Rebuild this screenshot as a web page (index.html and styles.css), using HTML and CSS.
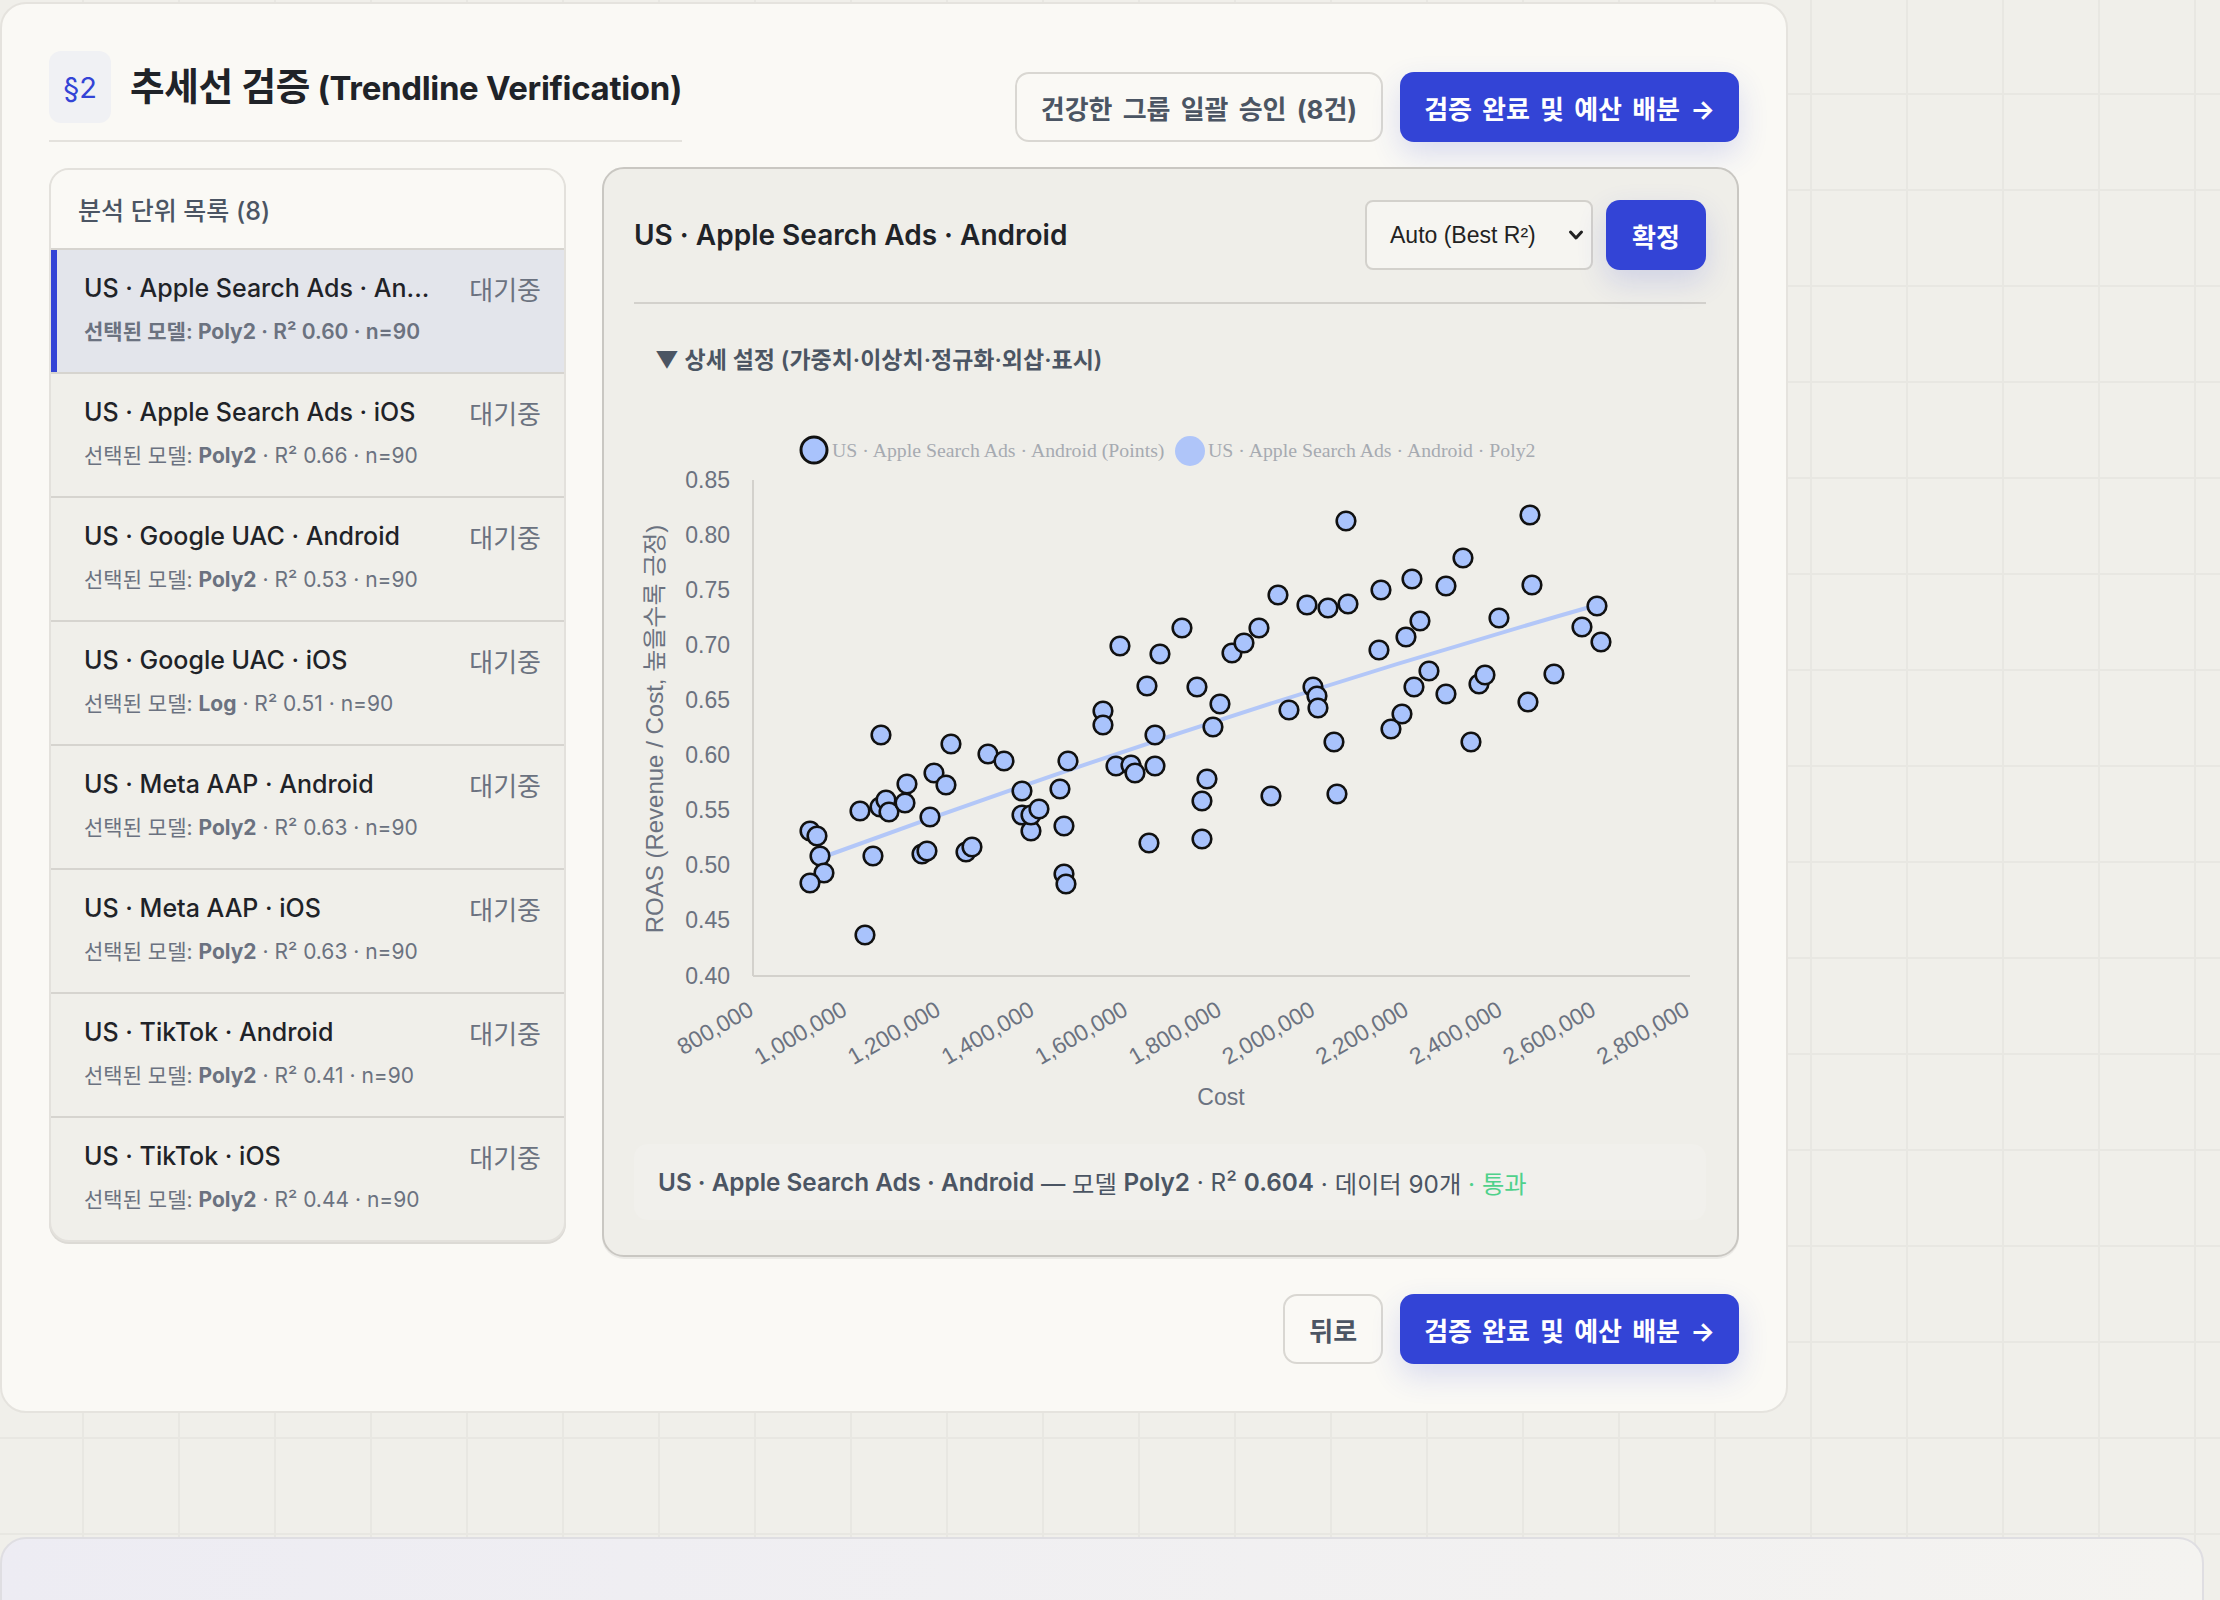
FILE: index.html
```html
<!DOCTYPE html>
<html lang="ko">
<head>
    <meta charset="UTF-8" />
    <title>추세선 검증</title>
    <link rel="stylesheet" href="styles.css">
</head>
<body>
    <div class="page">
        <section class="card">
            <header class="card-head">
                <div class="title-block">
                    <span class="badge">§2</span>
                    <h2><span class="ko">추세선 검증</span> (Trendline Verification)</h2>
                </div>
                <div class="actions">
                    <button class="btn btn-outline">건강한 그룹 일괄 승인 (8건)</button>
                    <button class="btn btn-primary">검증 완료 및 예산 배분 →</button>
                </div>
            </header>

            <div class="layout">
                <aside class="unit-list">
                    <div class="unit-list-head">분석 단위 목록 (8)</div>
                    <div class="unit active">
                        <div class="unit-row"><span class="unit-name">US · Apple Search Ads · An...</span><span class="unit-status">대기중</span></div>
                        <div class="unit-meta">선택된 모델: <b>Poly2</b> · R² 0.60 · n=90</div>
                    </div>
                    <div class="unit">
                        <div class="unit-row"><span class="unit-name">US · Apple Search Ads · iOS</span><span class="unit-status">대기중</span></div>
                        <div class="unit-meta">선택된 모델: <b>Poly2</b> · R² 0.66 · n=90</div>
                    </div>
                    <div class="unit">
                        <div class="unit-row"><span class="unit-name">US · Google UAC · Android</span><span class="unit-status">대기중</span></div>
                        <div class="unit-meta">선택된 모델: <b>Poly2</b> · R² 0.53 · n=90</div>
                    </div>
                    <div class="unit">
                        <div class="unit-row"><span class="unit-name">US · Google UAC · iOS</span><span class="unit-status">대기중</span></div>
                        <div class="unit-meta">선택된 모델: <b>Log</b> · R² 0.51 · n=90</div>
                    </div>
                    <div class="unit">
                        <div class="unit-row"><span class="unit-name">US · Meta AAP · Android</span><span class="unit-status">대기중</span></div>
                        <div class="unit-meta">선택된 모델: <b>Poly2</b> · R² 0.63 · n=90</div>
                    </div>
                    <div class="unit">
                        <div class="unit-row"><span class="unit-name">US · Meta AAP · iOS</span><span class="unit-status">대기중</span></div>
                        <div class="unit-meta">선택된 모델: <b>Poly2</b> · R² 0.63 · n=90</div>
                    </div>
                    <div class="unit">
                        <div class="unit-row"><span class="unit-name">US · TikTok · Android</span><span class="unit-status">대기중</span></div>
                        <div class="unit-meta">선택된 모델: <b>Poly2</b> · R² 0.41 · n=90</div>
                    </div>
                    <div class="unit">
                        <div class="unit-row"><span class="unit-name">US · TikTok · iOS</span><span class="unit-status">대기중</span></div>
                        <div class="unit-meta">선택된 모델: <b>Poly2</b> · R² 0.44 · n=90</div>
                    </div>
                </aside>

                <div class="detail">
                    <div class="detail-head">
                        <h3>US · Apple Search Ads · Android</h3>
                        <div class="select">
                            <span>Auto (Best R²)</span>
                            <svg width="16" height="12" viewBox="0 0 16 12"><path d="M2.5 3l5.5 6 5.5-6" fill="none" stroke="#222" stroke-width="3" stroke-linecap="round" stroke-linejoin="round"/></svg>
                        </div>
                        <button class="btn btn-primary btn-small">확정</button>
                    </div>

                    <div class="settings">▼ 상세 설정 (가중치·이상치·정규화·외삽·표시)</div>

                    <svg id="chart" class="chart" width="1072" height="744" viewBox="634 380 1072 744">
                        <circle cx="814" cy="450" r="13" class="pt legend-pt"/>
                        <text x="832" y="457" class="legend">US · Apple Search Ads · Android (Points)</text>
                        <circle cx="1190" cy="451" r="15" class="legend-line"/>
                        <text x="1208" y="457" class="legend">US · Apple Search Ads · Android · Poly2</text>

                        <line x1="753" y1="480" x2="753" y2="976" class="axis"/>
                        <line x1="753" y1="976" x2="1690" y2="976" class="axis"/>

                        <text class="axis-title y-title" transform="translate(663 729) rotate(-90)" text-anchor="middle">ROAS (Revenue / Cost, 높을수록 긍정)</text>
                        <text class="axis-title" x="1221" y="1105" text-anchor="middle">Cost</text>

                        <path d="M826 856 Q1208 716 1590 607" class="trend"/>
                        <g id="ticks"></g>
                        <g id="points"></g>
                    </svg>

                    <div class="summary">
                        <b>US · Apple Search Ads · Android</b>&nbsp;— 모델&nbsp;<b>Poly2</b>&nbsp;· R²&nbsp;<b>0.604</b>&nbsp;· 데이터 90개&nbsp;<span class="ok">· 통과</span>
                    </div>
                </div>
            </div>

            <div class="footer-actions">
                <button class="btn btn-outline">뒤로</button>
                <button class="btn btn-primary">검증 완료 및 예산 배분 →</button>
            </div>
        </section>

        <section class="card card-next"></section>
    </div>

    <script>
        const ns = "http://www.w3.org/2000/svg";
        const ticks = document.getElementById("ticks");
        const pointLayer = document.getElementById("points");

        function el(name, attrs, text) {
            const node = document.createElementNS(ns, name);
            for (const key in attrs) node.setAttribute(key, attrs[key]);
            if (text) node.textContent = text;
            return node;
        }

        // y axis: 0.40 .. 0.85
        for (let i = 0; i <= 9; i++) {
            const y = 975.5 - i * 55.06;
            ticks.appendChild(el("text", { x: 730, y: y + 8, class: "tick", "text-anchor": "end" }, (0.40 + i * 0.05).toFixed(2)));
        }

        // x axis: 800,000 .. 2,800,000
        for (let i = 0; i <= 10; i++) {
            const x = 753 + i * 93.6;
            const label = (800000 + i * 200000).toLocaleString("en-US");
            ticks.appendChild(el("text", { x: x + 2, y: 1014, class: "tick", "text-anchor": "end", transform: `rotate(-30 ${x + 2} 1014)` }, label));
        }

        // cost / roas samples, already in chart pixels
        const points = [
            [810,831],[817,836],[820,856],[824,873],[810,883],[865,935],[873,856],[860,811],[881,735],[880,807],
            [886,800],[889,812],[905,803],[907,784],[930,817],[922,854],[927,851],[934,773],[946,785],[951,744],
            [966,852],[972,847],[988,754],[1004,761],[1022,791],[1022,815],[1031,831],[1031,815],[1039,809],[1060,789],
            [1064,826],[1064,874],[1066,884],[1068,761],[1103,711],[1103,725],[1116,766],[1131,765],[1135,773],[1155,766],
            [1149,843],[1147,686],[1155,735],[1120,646],[1160,654],[1182,628],[1197,687],[1202,801],[1207,779],[1202,839],
            [1213,727],[1220,704],[1232,653],[1244,643],[1259,628],[1271,796],[1278,595],[1289,710],[1307,605],[1313,687],
            [1317,696],[1318,708],[1328,608],[1334,742],[1337,794],[1346,521],[1348,604],[1379,650],[1381,590],[1391,729],
            [1402,714],[1406,637],[1412,579],[1414,687],[1420,621],[1429,671],[1446,586],[1446,694],[1463,558],[1471,742],
            [1479,684],[1485,675],[1499,618],[1530,515],[1532,585],[1528,702],[1554,674],[1582,627],[1597,606],[1601,642]
        ];
        points.forEach(([x, y]) => {
            pointLayer.appendChild(el("circle", { cx: x, cy: y, r: 9.3, class: "pt" }));
        });
    </script>
</body>
</html>
```

FILE: styles.css
```css
body {
    margin: 0;
    font-family: "Inter", "Noto Sans CJK KR", sans-serif;
    color: #1f2328;
    background-color: #f0efea;
    background-image:
        linear-gradient(to right, #e8e7e2 2px, transparent 2px),
        linear-gradient(to bottom, #e8e7e2 2px, transparent 2px);
    background-size: 96px 96px;
    background-position: 82px 93px;
    overflow: hidden;
}

.page {
    padding-top: 2px;
}

.card {
    width: 1788px;
    box-sizing: border-box;
    background: #faf9f5;
    border: 2px solid #e5e3de;
    border-radius: 26px;
    padding: 47px;
}

.card-next {
    width: 2204px;
    height: 200px;
    margin-top: 124px;
    padding: 0;
    border-color: #dfdee2;
    background: linear-gradient(90deg, #edecf3, #f4f3f0);
}

/* header */
.card-head {
    display: flex;
    justify-content: space-between;
    align-items: flex-end;
}

.title-block {
    display: flex;
    align-items: center;
    gap: 19px;
    padding-bottom: 17px;
    border-bottom: 2px solid #e4e2dd;
}

.badge {
    width: 62px;
    height: 72px;
    display: flex;
    align-items: center;
    justify-content: center;
    border-radius: 12px;
    background: #f0f1f4;
    color: #3344d6;
    font-size: 29px;
}

.title-block h2 {
    margin: 0;
    font-size: 33px;
    font-weight: 700;
    letter-spacing: -0.01em;
    line-height: 44px;
}

.title-block h2 .ko {
    font-size: 1.14em;
}

.actions,
.footer-actions {
    display: flex;
    gap: 17px;
}

.btn {
    height: 70px;
    padding: 0 24px;
    border-radius: 14px;
    font-family: inherit;
    font-size: 26px;
    font-weight: 700;
    word-spacing: 4px;
    cursor: pointer;
}

.btn-outline {
    background: #faf9f5;
    border: 2px solid #d9d7d2;
    color: #4b5563;
}

.btn-primary {
    background: #3344d6;
    border: none;
    color: #fff;
    box-shadow: 0 12px 30px rgba(51, 68, 214, 0.16);
}

.btn-small {
    width: 100px;
    padding: 0;
}

/* body */
.layout {
    display: grid;
    grid-template-columns: 517px 1fr;
    gap: 36px;
    margin-top: 25px;
    align-items: start;
}

.unit-list {
    margin-top: 1px;
    border: 2px solid #e3e1dc;
    border-radius: 20px;
    overflow: hidden;
    background: #f0efea;
    box-shadow: 0 2px 0 #dcdad5;
}

.unit-list-head {
    height: 78px;
    display: flex;
    align-items: center;
    padding-left: 27px;
    background: #faf9f5;
    color: #4b5563;
    font-size: 25px;
    font-weight: 500;
}

.unit {
    height: 122px;
    box-sizing: content-box;
    border-top: 2px solid #d6d4cf;
    padding: 0 23px 0 33px;
}

.unit.active {
    background: #e3e5eb;
    box-shadow: inset 6px 0 0 #3344d6;
}

.unit-row {
    display: flex;
    justify-content: space-between;
    align-items: center;
    padding-top: 22px;
    height: 32px;
}

.unit-name {
    font-size: 25px;
    font-weight: 500;
}

.unit-status {
    color: #6b7280;
    font-size: 26px;
}

.unit-meta {
    margin-top: 13px;
    line-height: 30px;
    color: #6b7280;
    font-size: 21px;
}

.unit-meta b {
    font-weight: 700;
}

.unit.active .unit-meta {
    font-weight: 600;
}

/* detail panel */
.detail {
    border: 2px solid #c9c7c2;
    border-radius: 22px;
    background: #efeee9;
    padding: 31px 31px 35px 30px;
    box-shadow: 0 2px 0 rgba(0, 0, 0, 0.06);
}

.detail-head {
    display: flex;
    align-items: center;
    gap: 13px;
    padding-bottom: 32px;
    border-bottom: 2px solid #d3d1cc;
}

.detail-head h3 {
    margin: 0 auto 0 0;
    font-size: 28px;
    font-weight: 600;
}

.select {
    width: 228px;
    height: 70px;
    box-sizing: border-box;
    display: flex;
    align-items: center;
    justify-content: space-between;
    padding: 0 7px 0 23px;
    border: 2px solid #d3d1cc;
    border-radius: 8px;
    background: #f6f5f1;
    font-family: "Liberation Sans", sans-serif;
    font-size: 23px;
    color: #222;
}

.settings {
    margin: 41px 0 0 21px;
    line-height: 30px;
    font-size: 23px;
    font-weight: 600;
    color: #4b5563;
}

.chart {
    display: block;
    margin-top: 5px;
    font-family: "Liberation Sans", "Noto Sans CJK KR", sans-serif;
}

.chart .legend {
    font-family: "Liberation Serif", serif;
    font-size: 19.8px;
    fill: #a6aab1;
}

.chart .tick,
.chart .axis-title {
    font-size: 23px;
    fill: #6b7280;
}

.chart .y-title {
    font-size: 24px;
}

.chart .axis {
    stroke: #d3d1cc;
    stroke-width: 2;
}

.chart .trend {
    fill: none;
    stroke: #b3c7f8;
    stroke-width: 4;
}

.chart .pt {
    fill: #a9c3fc;
    stroke: #111;
    stroke-width: 2.6;
}

.chart .legend-pt {
    stroke-width: 3;
}

.chart .legend-line {
    fill: #afc5f9;
}

.summary {
    margin-top: 20px;
    height: 76px;
    display: flex;
    align-items: center;
    padding: 0 24px;
    border-radius: 14px;
    background: #f1f0ec;
    color: #4b5563;
    font-size: 24.3px;
    white-space: nowrap;
}

.summary b {
    font-weight: 600;
}

.summary .ok {
    color: #4fd18b;
}

.footer-actions {
    justify-content: flex-end;
    margin-top: 37px;
}
```
